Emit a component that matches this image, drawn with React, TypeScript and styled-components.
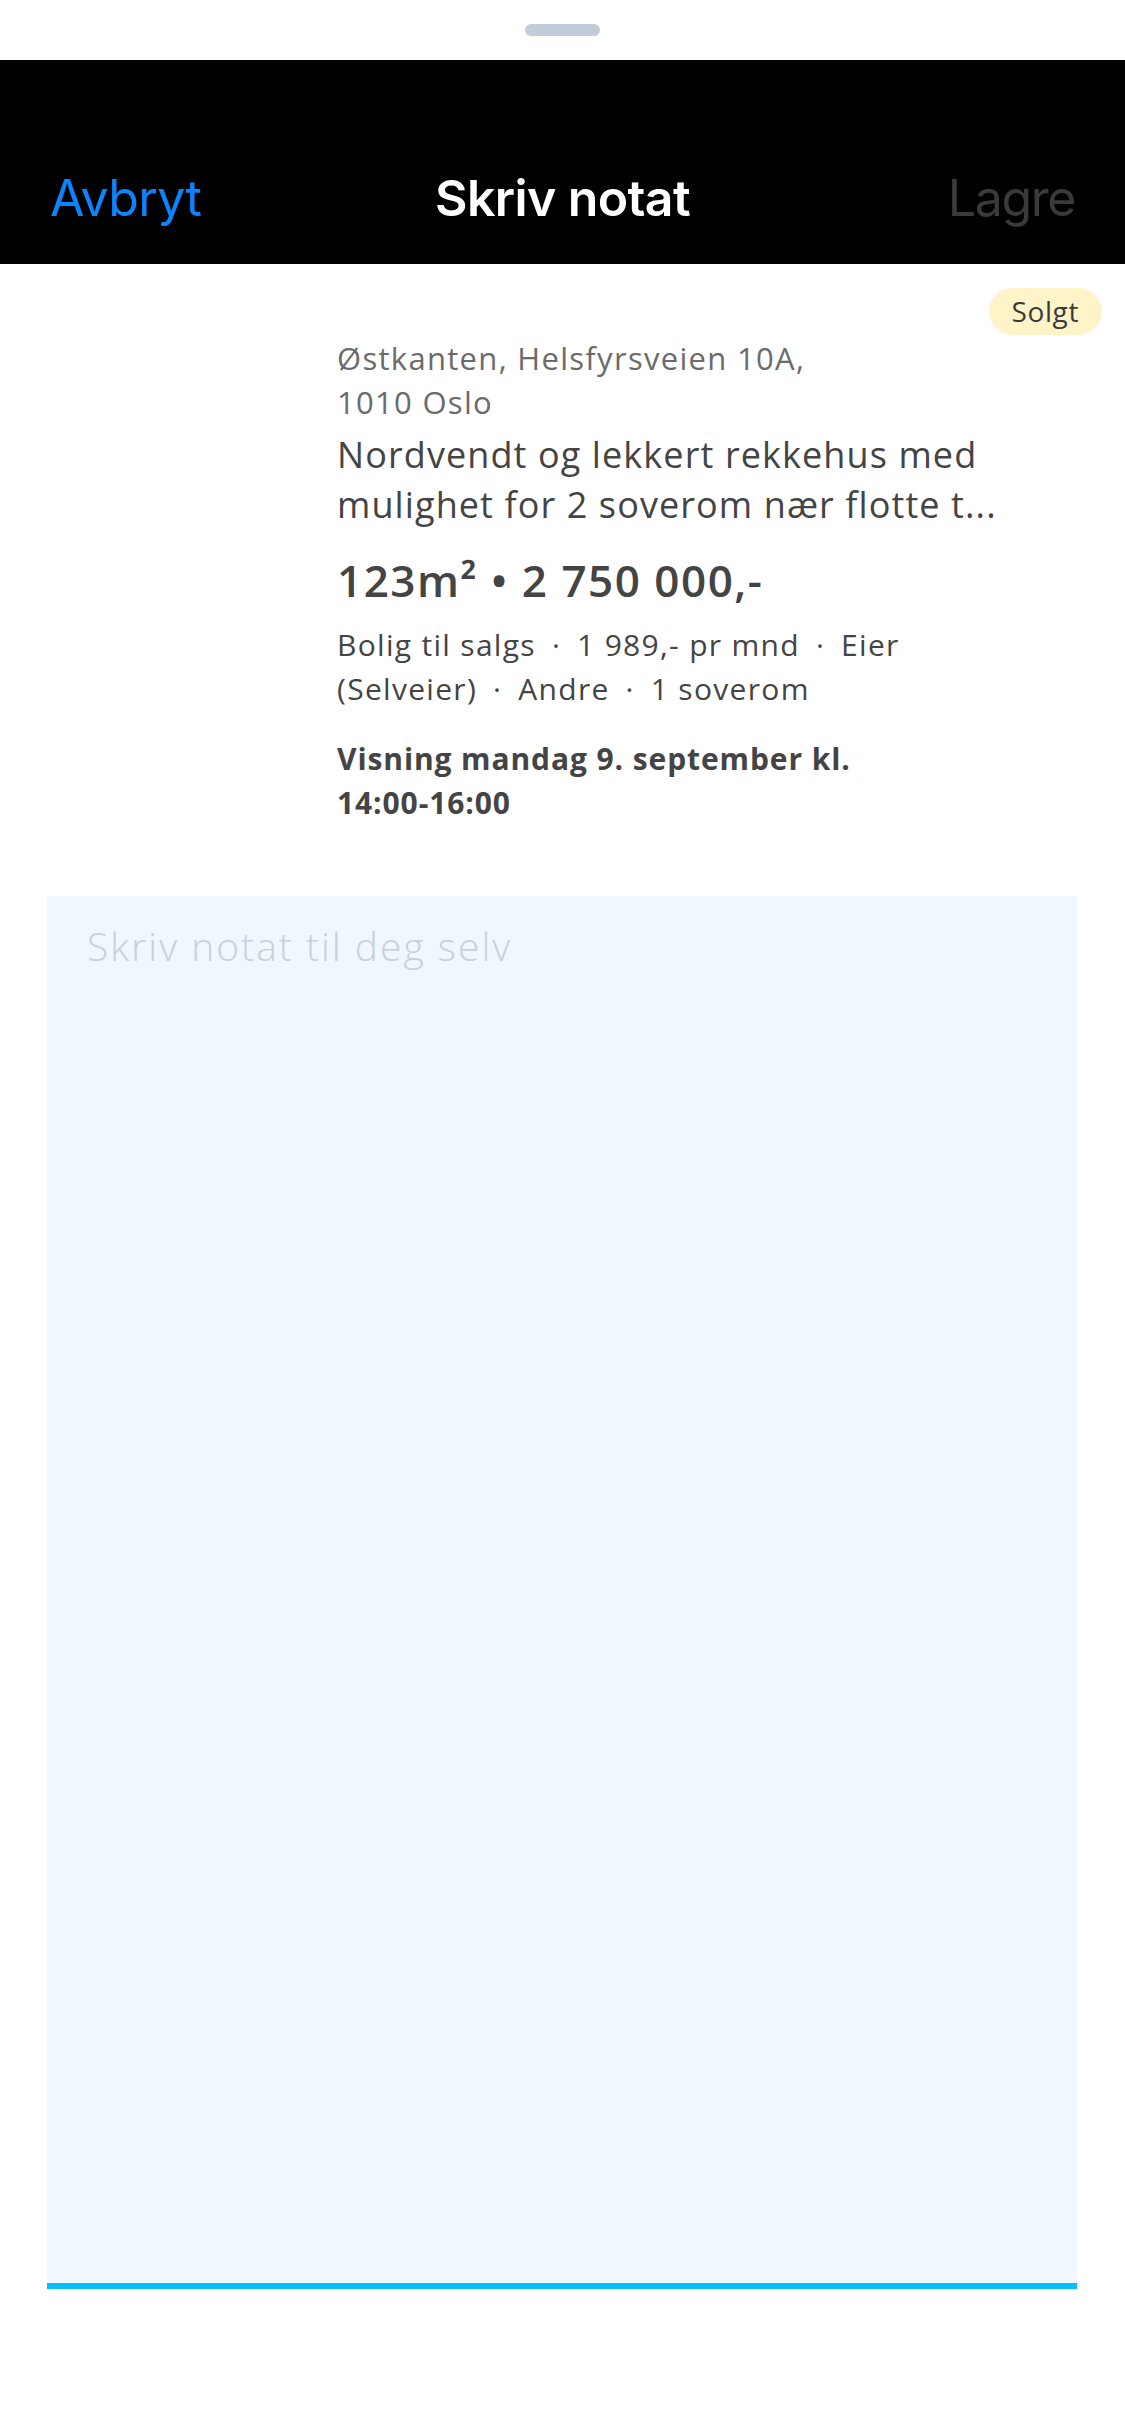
import React from "react";
import styled, { createGlobalStyle } from "styled-components";

const Global = createGlobalStyle`
  html, body { margin: 0; padding: 0; background: #ffffff; }
  body { font-family: "Open Sans", "Noto Sans", sans-serif; }
  * { box-sizing: border-box; }
`;

const Page = styled.div`
  width: 1125px;
  height: 2436px;
  background: #ffffff;
  display: flex;
  flex-direction: column;
`;

const HandleArea = styled.div`
  height: 60px;
  display: flex;
  justify-content: center;
  padding-top: 24px;
`;

const Handle = styled.div`
  width: 75px;
  height: 12px;
  border-radius: 6px;
  background: #c3cdd9;
`;

const NavBar = styled.header`
  height: 204px;
  background: #000000;
  display: grid;
  grid-template-columns: 1fr auto 1fr;
  align-items: end;
  padding: 0 50px 36px 50px;
  font-family: "Inter", "Liberation Sans", sans-serif;
  font-size: 50px;
  line-height: 60px;
  letter-spacing: -0.6px;
`;

const NavButton = styled.span<{ $align: "left" | "right"; $color: string }>`
  justify-self: ${(p) => (p.$align === "left" ? "start" : "end")};
  color: ${(p) => p.$color};
  font-weight: 400;
  letter-spacing: ${(p) => (p.$align === "right" ? "-1.4px" : "-0.6px")};
`;

const NavTitle = styled.span`
  color: #ffffff;
  font-weight: 600;
`;

const Listing = styled.section`
  position: relative;
  display: flex;
  padding-top: 72px;
`;

const Thumb = styled.div`
  width: 337px;
  flex-shrink: 0;
`;

const Info = styled.div`
  width: 672px;
  display: flex;
  flex-direction: column;
  color: #444444;
`;

const Badge = styled.span`
  position: absolute;
  top: 24px;
  right: 23px;
  height: 47px;
  padding: 0 23px;
  border-radius: 24px;
  background: #fff3c8;
  color: #3b3b3b;
  font-size: 28px;
  line-height: 47px;
  letter-spacing: 0.6px;
`;

const Address = styled.div`
  font-size: 31px;
  line-height: 44px;
  letter-spacing: 1.3px;
  color: #6b6b6b;
`;

const Title = styled.div`
  margin-top: 6px;
  font-size: 36px;
  line-height: 50px;
  letter-spacing: 1.1px;
  color: #444444;
  display: -webkit-box;
  -webkit-line-clamp: 2;
  -webkit-box-orient: vertical;
  overflow: hidden;
`;

const Price = styled.div`
  margin-top: 22px;
  font-size: 44px;
  line-height: 56px;
  letter-spacing: 1.5px;
  font-weight: 600;
  color: #444444;
`;

const Facts = styled.div`
  margin-top: 15px;
  font-size: 30px;
  line-height: 44px;
  letter-spacing: 1.3px;
  color: #444444;
`;

const Dot = styled.span`
  margin: 0 16px;
`;

const Viewing = styled.div`
  margin-top: 26px;
  font-size: 30px;
  line-height: 44px;
  letter-spacing: 0.9px;
  font-weight: 700;
  color: #444444;
`;

const NoWrap = styled.span`
  white-space: nowrap;
`;

const NoteWrap = styled.div`
  margin: 71px 48px 0 47px;
`;

const NoteArea = styled.textarea`
  display: block;
  width: 100%;
  height: 1393px;
  border: none;
  border-bottom: 6px solid #06befb;
  background: #f0f7fe;
  padding: 20px 40px;
  resize: none;
  outline: none;
  font-family: "Open Sans", "Noto Sans", sans-serif;
  font-size: 39px;
  line-height: 60px;
  letter-spacing: 2px;
  font-weight: 300;
  color: #3b3b3b;
  &::placeholder {
    color: #c7d0dc;
  }
`;

export default function App() {
  return (
    <Page>
      <Global />
      <HandleArea>
        <Handle />
      </HandleArea>
      <NavBar>
        <NavButton $align="left" $color="#0a84ff">Avbryt</NavButton>
        <NavTitle>Skriv notat</NavTitle>
        <NavButton $align="right" $color="#3a3a3c">Lagre</NavButton>
      </NavBar>
      <Listing>
        <Thumb />
        <Info>
          <Address>
            Østkanten, Helsfyrsveien 10A,
            <br />
            1010 Oslo
          </Address>
          <Title>Nordvendt og lekkert rekkehus med mulighet for 2 soverom nær flotte t...</Title>
          <Price>123m² • 2 750 000,-</Price>
          <Facts>
            Bolig til salgs<Dot>·</Dot>1 989,- pr mnd<Dot>·</Dot>Eier (Selveier)<Dot>·</Dot>Andre<Dot>·</Dot>1 soverom
          </Facts>
          <Viewing>
            Visning mandag 9. september kl. <NoWrap>14:00-16:00</NoWrap>
          </Viewing>
        </Info>
        <Badge>Solgt</Badge>
      </Listing>
      <NoteWrap>
        <NoteArea placeholder="Skriv notat til deg selv" />
      </NoteWrap>
    </Page>
  );
}
